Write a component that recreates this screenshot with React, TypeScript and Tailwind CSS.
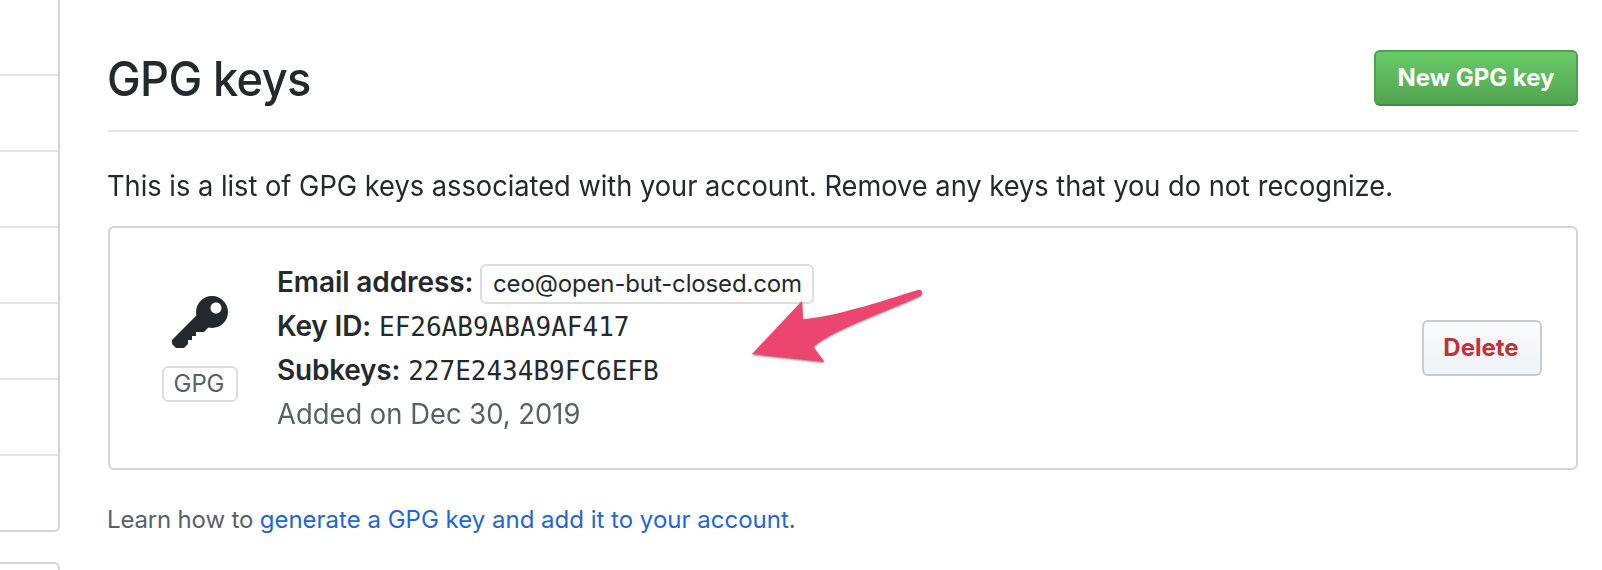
import type { ReactNode } from "react";

function Sidebar() {
  return (
    <aside className="flex h-[570px] w-[60px] shrink-0 flex-col overflow-hidden">
      <div className="h-[532px] shrink-0 rounded-br-[6px] border-r-2 border-b-2 border-[#d1d5da]">
        <div className="h-[76px] border-b-2 border-[#e1e4e8]" />
        <div className="h-[76px] border-b-2 border-[#e1e4e8]" />
        <div className="h-[76px] border-b-2 border-[#e1e4e8]" />
        <div className="h-[76px] border-b-2 border-[#e1e4e8]" />
        <div className="h-[76px] border-b-2 border-[#e1e4e8]" />
        <div className="h-[76px] border-b-2 border-[#e1e4e8]" />
      </div>
      <div className="mt-[30px] h-[40px] shrink-0 rounded-tr-[6px] border-t-2 border-r-2 border-[#d1d5da]" />
    </aside>
  );
}

function KeyIcon() {
  return (
    <svg className="block h-16 w-14" viewBox="0 0 14 16" fill="#24292e" aria-hidden="true">
      <path
        fillRule="evenodd"
        d="M12.83 2.17C12.08 1.42 11.14 1.03 10 1c-1.13.03-2.08.42-2.83 1.17S6.04 3.86 6.01 5c0 .3.03.59.09.89L0 12v1l1 1h2l1-1v-1h1v-1h1v-1h2l1.09-1.11c.3.08.59.11.91.11 1.14-.03 2.08-.42 2.83-1.17S13.97 6.14 14 5c-.03-1.14-.42-2.08-1.17-2.83zM11 5.38c-.77 0-1.38-.61-1.38-1.38 0-.77.61-1.38 1.38-1.38.77 0 1.38.61 1.38 1.38 0 .77-.61 1.38-1.38 1.38z"
      />
    </svg>
  );
}

function Row({ children }: { children: ReactNode }) {
  return <div className="flex h-11 items-baseline leading-[44px]">{children}</div>;
}

function Arrow() {
  return (
    <svg
      className="absolute top-[62px] left-[632px] h-[90px] w-[190px]"
      viewBox="742 290 190 90"
      aria-hidden="true"
    >
      <path
        className="drop-shadow-[0_1.5px_1px_rgba(0,0,0,0.5)]"
        fill="#ec466e"
        d="M752 354L802 301L803 319.3C833 317 880 302 918 290C922 289 923.500 294 920 296C885 312 830 331 813.500 347L824.500 362Z"
      />
    </svg>
  );
}

export default function App() {
  return (
    <div className="flex h-[570px] w-[1602px] overflow-hidden bg-white font-['Inter','Liberation_Sans',sans-serif] text-[28px] font-normal whitespace-nowrap text-[#24292e]">
      <Sidebar />
      <main className="ml-12 w-[1470px]">
        <header className="flex h-[132px] items-start justify-between border-b-2 border-[#e1e4e8]">
          <h1 className="mt-[43px] -ml-px origin-left scale-x-94 text-[48px] leading-[72px] font-[450] tracking-[-0.65px]">
            GPG keys
          </h1>
          <button className="mt-[50px] h-14 w-[204px] rounded-[6px] border-2 border-[#4f9f51] border-b-[#458b48] bg-linear-to-b from-[#6acb68] to-[#51a450] text-center text-[24px] leading-[50px] font-[650] tracking-[-0.05px] text-white">
            New GPG key
          </button>
        </header>
        <p className="mt-[33px] -ml-px h-[42px] origin-left scale-x-[0.9725] leading-[42px]">
          This is a list of GPG keys associated with your account. Remove any keys that you do not recognize.
        </p>
        <section className="relative mt-[19px] flex h-[244px] rounded-[6px] border-2 border-[#d1d5da]">
          <div className="ml-[52px] flex w-[76px] flex-col items-center pt-16">
            <KeyIcon />
            <span className="mt-[10px] h-9 w-[76px] rounded-[6px] border-2 border-[#dddddd] pr-[2px] text-center text-[24px] leading-[32px] tracking-[-0.1px] text-[#586069]">
              GPG
            </span>
          </div>
          <div className="ml-[39px] pt-8">
            <Row>
              <strong className="w-[195px] font-[620] tracking-[-0.1px]">Email address:</strong>
              <span className="ml-2 h-10 w-[334px] rounded-[6px] border-2 border-[#dddddd] px-[11px] text-[24px] leading-[36px] tracking-[-0.14px]">
                ceo@open-but-closed.com
              </span>
            </Row>
            <Row>
              <strong className="font-[620] tracking-[-0.15px]">Key ID:</strong>
              <code className="ml-2 font-['DejaVu_Sans_Mono',monospace] text-[26px]">EF26AB9ABA9AF417</code>
            </Row>
            <Row>
              <strong className="font-[620] tracking-[-0.22px]">Subkeys:</strong>
              <code className="ml-2 font-['DejaVu_Sans_Mono',monospace] text-[26px]">227E2434B9FC6EFB</code>
            </Row>
            <Row>
              <span className="origin-left scale-x-[0.978] text-[#586069]">Added on Dec 30, 2019</span>
            </Row>
          </div>
          <button className="mt-[92px] mr-[34px] ml-auto h-14 w-[120px] rounded-[6px] border-2 border-[#c9cbcf] bg-linear-to-b from-[#fafbfc] to-[#eff3f6] pr-[2px] text-center text-[24px] leading-[50px] font-[650] text-[#bd3338]">
            Delete
          </button>
          <Arrow />
        </section>
        <p className="mt-8 -ml-px h-9 text-[24px] leading-9 text-[#586069]">
          <span className="tracking-[-0.17px]">Learn how to </span>
          <a className="text-[#2366d3]">generate a GPG key and add it to your account</a>.
        </p>
      </main>
    </div>
  );
}
